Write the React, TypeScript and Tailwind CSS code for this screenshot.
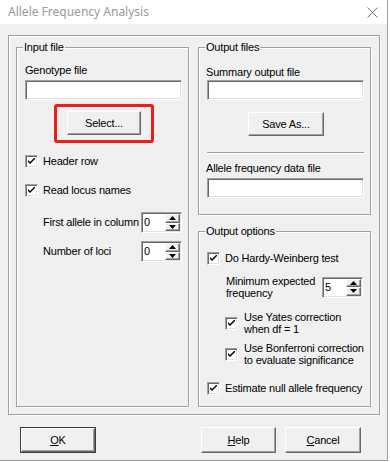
import React from "react";

const sunken =
  "border border-t-[#a0a0a0] border-l-[#a0a0a0] border-b-white border-r-white shadow-[inset_1px_1px_0_#696969,inset_-1px_-1px_0_#e3e3e3] bg-white";
const raised =
  "border border-t-white border-l-white border-b-[#696969] border-r-[#696969] shadow-[inset_-1px_-1px_0_#a0a0a0] bg-[#f0f0f0]";
const etched =
  "border border-[#a0a0a0] shadow-[inset_1px_1px_0_#fff,1px_1px_0_#fff]";

function Input() {
  return <div className={`h-[20px] w-full ${sunken}`} />;
}

function CheckBox() {
  return (
    <div className={`w-[13px] h-[13px] shrink-0 flex items-center justify-center ${sunken}`}>
      <svg width="7" height="7" viewBox="0 0 7 7">
        <path d="M0 2 L0 4 L2 6 L7 1 L7 -1 L2 4 Z" fill="#000" />
      </svg>
    </div>
  );
}

function Button({
  children,
  className = "",
  def = false,
}: {
  children: React.ReactNode;
  className?: string;
  def?: boolean;
}) {
  if (def) {
    return (
      <div className={`border border-[#3c3c3c] ${className}`}>
        <div className={`w-full h-full flex items-center justify-center ${raised}`}>{children}</div>
      </div>
    );
  }
  return <div className={`flex items-center justify-center ${raised} ${className}`}>{children}</div>;
}

function Spin({ value }: { value: string }) {
  return (
    <div className={`flex h-[21px] w-[41px] shrink-0 ${sunken}`}>
      <span className="flex-1 pl-[2px] leading-[19px]">{value}</span>
      <div className="flex flex-col w-[15px] mr-px my-px">
        <div className={`flex-1 flex items-center justify-center ${raised}`}>
          <svg width="7" height="4" viewBox="0 0 7 4">
            <path d="M3.5 0 L7 4 L0 4 Z" fill="#000" />
          </svg>
        </div>
        <div className={`flex-1 flex items-center justify-center ${raised}`}>
          <svg width="7" height="4" viewBox="0 0 7 4">
            <path d="M0 0 L7 0 L3.5 4 Z" fill="#000" />
          </svg>
        </div>
      </div>
    </div>
  );
}

function Group({
  label,
  className = "",
  children,
}: {
  label: string;
  className?: string;
  children?: React.ReactNode;
}) {
  return (
    <div className={`relative ${etched} ${className}`}>
      <span className="absolute -top-[7px] left-[6px] bg-[#f0f0f0] px-px leading-[12px] whitespace-nowrap">{label}</span>
      {children}
    </div>
  );
}

export default function App() {
  return (
    <div className="w-[390px] h-[462px] bg-white">
      <div className="w-[388px] h-[461px] border-r border-b border-[#a0a0a0] bg-[#f0f0f0] flex flex-col font-['Liberation_Sans',Arial,sans-serif] text-[11px] tracking-[-0.2px] text-black whitespace-nowrap">
        {/* Title bar */}
        <div className="h-[24px] bg-white flex items-center justify-between pl-[8px] pr-[9px] shrink-0">
          <span className="font-['Noto_Sans',sans-serif] text-[12px] tracking-normal text-[#9a9a9a]">
            Allele Frequency Analysis
          </span>
          <svg width="11" height="11" viewBox="0 0 11 11">
            <path d="M0.5 0.5 L10.5 10.5 M10.5 0.5 L0.5 10.5" stroke="#777" strokeWidth="1" />
          </svg>
        </div>

        {/* Frame */}
        <div
          className={`mt-[11px] ml-[8px] w-[372px] h-[380px] pt-[11px] pl-[7px] pr-[9px] flex gap-[9px] ${etched}`}
        >
          {/* Input file */}
          <Group label="Input file" className="w-[173px] h-[360px] pl-[8px] pr-[6px] flex flex-col">
            <div className="mt-[16px] leading-[12px]">Genotype file</div>
            <div className="mt-[4px]">
              <Input />
            </div>
            <div className="mt-[11px] ml-[42px] relative w-[74px] h-[24px]">
              <div className="absolute -left-[13px] -top-[7px] w-[100px] h-[39px] border-[3px] border-[#ea1f1a] rounded-[3px]" />
              <Button className="w-[74px] h-[24px]">Select...</Button>
            </div>
            <div className="mt-[20px] flex items-center gap-[5px] h-[13px]">
              <CheckBox />
              <span>Header row</span>
            </div>
            <div className="mt-[16px] flex items-center gap-[5px] h-[13px]">
              <CheckBox />
              <span>Read locus names</span>
            </div>
            <div className="mt-[15px] pl-[18px] flex items-center">
              <span className="w-[98px]">First allele in column</span>
              <Spin value="0" />
            </div>
            <div className="mt-[8px] pl-[18px] flex items-center">
              <span className="w-[98px]">Number of loci</span>
              <Spin value="0" />
            </div>
          </Group>

          {/* Right column */}
          <div className="w-[173px] flex flex-col gap-[16px]">
            <Group label="Output files" className="h-[168px] pl-[8px] pr-[6px] flex flex-col">
              <div className="mt-[18px] leading-[12px] -ml-px">Summary output file</div>
              <div className="mt-[2px]">
                <Input />
              </div>
              <div className="mt-[12px] ml-[41px]">
                <Button className="w-[76px] h-[24px]">Save As...</Button>
              </div>
              <div className="mt-[16px] h-[2px] border-t border-[#a0a0a0] border-b border-b-white" />
              <div className="mt-[8px] leading-[12px] -ml-px">Allele frequency data file</div>
              <div className="mt-[4px]">
                <Input />
              </div>
            </Group>

            <Group label="Output options" className="h-[176px] pl-[8px] pr-[6px] flex flex-col">
              <div className="mt-[20px] flex items-center gap-[5px] h-[13px]">
                <CheckBox />
                <span>Do Hardy-Weinberg test</span>
              </div>
              <div className="mt-[10px] pl-[19px] flex items-center h-[24px]">
                <span className="w-[96px] leading-[12px]">
                  Minimum expected
                  <br />
                  frequency
                </span>
                <Spin value="5" />
              </div>
              <div className="mt-[12px] pl-[18px] flex items-center gap-[6px]">
                <CheckBox />
                <span className="leading-[12px]">
                  Use Yates correction
                  <br />
                  when df = 1
                </span>
              </div>
              <div className="mt-[7px] pl-[18px] flex items-center gap-[6px]">
                <CheckBox />
                <span className="leading-[12px]">
                  Use Bonferroni correction
                  <br />
                  to evaluate significance
                </span>
              </div>
              <div className="mt-[16px] flex items-center gap-[5px] h-[13px]">
                <CheckBox />
                <span>Estimate null allele frequency</span>
              </div>
            </Group>
          </div>
        </div>

        {/* Buttons */}
        <div className="mt-[12px] flex pl-[20px]">
          <Button def className="w-[76px] h-[26px]">
            <span>
              <u>O</u>K
            </span>
          </Button>
          <Button className="ml-[105px] w-[75px] h-[26px]">
            <span>
              <u>H</u>elp
            </span>
          </Button>
          <Button className="ml-[9px] w-[76px] h-[26px]">
            <span>
              <u>C</u>ancel
            </span>
          </Button>
        </div>
      </div>
    </div>
  );
}
